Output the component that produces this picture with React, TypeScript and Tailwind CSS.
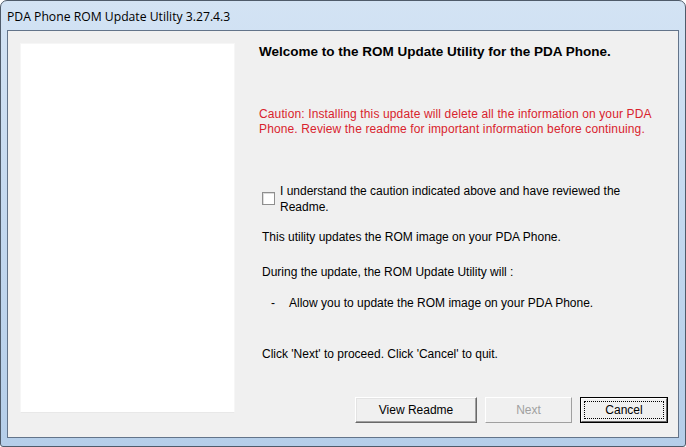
const btnBase =
  "h-[26px] text-[12px] flex items-center justify-center bg-[#f0f0f0] border border-t-white border-l-white border-r-[#696969] border-b-[#696969] shadow-[inset_-1px_-1px_0_#a0a0a0,inset_1px_1px_0_#e3e3e3]";

const App = () => {
  return (
    <div className="w-[686px] h-[447px] bg-white" style={{ fontFamily: '"Liberation Sans", Arial, sans-serif' }}>
      <div className="w-full h-full flex flex-col rounded-t-[7px] rounded-b-[3px] border border-[#4f5b6a] bg-gradient-to-b from-[#d3e3f4] via-[#c3d8ef] to-[#b5cee9] px-[6px] pb-[8px]">
        <div className="h-[29px] flex items-center pt-[4px]">
          <span className="text-[12.2px] text-black" style={{ fontFamily: '"Open Sans", "Noto Sans", sans-serif' }}>
            PDA Phone ROM Update Utility 3.27.4.3
          </span>
        </div>
        <div className="flex-1 flex border border-[#63748a] bg-[#f0f0f0] text-black">
          <div className="ml-[12px] mt-[12px] w-[215px] h-[370px] bg-white border border-[#f6f6f6] border-b-[#e8e8e8]" />
          <div className="flex-1 flex flex-col ml-[24px] mr-[10px] mt-[12px]">
            <h1 className="text-[13.5px] leading-[17px] font-bold">
              Welcome to the ROM Update Utility for the PDA Phone.
            </h1>
            <p className="mt-[47px] text-[12px] leading-[15px] tracking-[0.13px] text-[#d9232d]">
              Caution: Installing this update will delete all the information on your PDA Phone. Review the readme for important information before continuing.
            </p>
            <div className="mt-[46px] ml-[3px] flex items-start">
              <span className="mt-[9px] w-[13px] h-[13px] shrink-0 bg-white border border-[#8f8f8f] shadow-[inset_1px_1px_0_#dcdcdc]" />
              <span className="ml-[5px] text-[12px] leading-[16px] w-[360px]">
                I understand the caution indicated above and have reviewed the Readme.
              </span>
            </div>
            <p className="mt-[14px] ml-[3px] text-[12px] leading-[16px]">
              This utility updates the ROM image on your PDA Phone.
            </p>
            <p className="mt-[19px] ml-[3px] text-[12px] leading-[16px]">
              During the update, the ROM Update Utility will :
            </p>
            <div className="mt-[15px] ml-[12px] flex text-[12px] leading-[16px]">
              <span className="w-[18px]">-</span>
              <span>Allow you to update the ROM image on your PDA Phone.</span>
            </div>
            <p className="mt-[35px] ml-[3px] text-[12px] leading-[16px]">
              Click 'Next' to proceed. Click 'Cancel' to quit.
            </p>
            <div className="mt-[35px] flex justify-end gap-[8px]">
              <button className={`${btnBase} w-[122px] text-black`}>View Readme</button>
              <button className="w-[87px] h-[26px] text-[12px] flex items-center justify-center bg-[#f0f0f0] border border-t-white border-l-white border-r-[#a0a0a0] border-b-[#a0a0a0] text-[#a0a0a0]">
                Next
              </button>
              <div className="w-[88px] h-[26px] border border-black">
                <div className="w-full h-full flex items-center justify-center bg-[#f0f0f0] border border-t-white border-l-white border-r-[#696969] border-b-[#696969] p-[2px]">
                  <div className="w-full h-full flex items-center justify-center border border-dotted border-black text-[12px]">
                    Cancel
                  </div>
                </div>
              </div>
            </div>
          </div>
        </div>
      </div>
    </div>
  );
};

export default App;
